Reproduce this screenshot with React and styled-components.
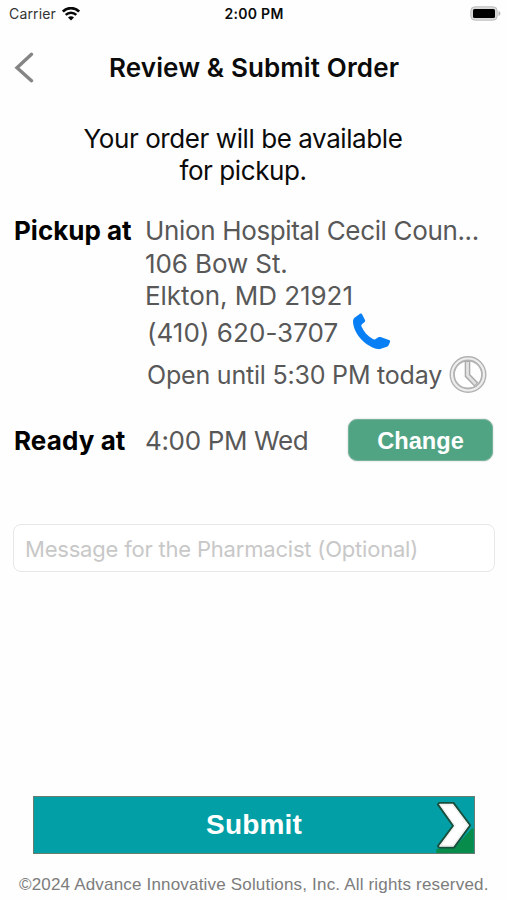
import React from "react";
import styled, { createGlobalStyle } from "styled-components";

const GlobalStyle = createGlobalStyle`
  * { box-sizing: border-box; }
  body { margin: 0; background: #fefefe; }
  svg { display: block; flex: none; }
`;

const Screen = styled.main`
  width: 507px;
  height: 900px;
  display: flex;
  flex-direction: column;
  overflow: hidden;
  background: #fefefe;
  color: #0b0b0b;
  font-family: Inter, sans-serif;
`;

const StatusBar = styled.header`
  height: 28px;
  display: grid;
  grid-template-columns: 1fr auto 1fr;
  align-items: center;
  padding: 0 8px 0 9px;
  font-size: 14px;
  line-height: 28px;
`;

const Carrier = styled.div`
  display: flex;
  align-items: center;
  gap: 6px;
  color: #333;
  letter-spacing: 0.15px;
`;

const Clock = styled.time`
  font-weight: 600;
  letter-spacing: 0.3px;
`;

const BatterySlot = styled.div`
  display: flex;
  justify-content: flex-end;
  margin-right: -2px;
  margin-top: -2px;
`;

const NavBar = styled.nav`
  height: 80px;
  display: flex;
  align-items: center;
  padding-left: 14px;
`;

const BackButton = styled.button`
  width: 95px;
  padding: 0;
  border: 0;
  background: none;
`;

const Title = styled.h1`
  margin: 0;
  font-size: 26px;
  line-height: 32px;
  font-weight: 600;
  letter-spacing: 0.13px;
  white-space: nowrap;
`;

const Notice = styled.p`
  margin: 15px 0 0;
  padding-right: 21px;
  text-align: center;
  font-size: 26px;
  line-height: 32px;
  letter-spacing: -0.42px;
`;

const Details = styled.dl`
  margin: 27px 0 0 14px;
  display: grid;
  grid-template-columns: 131px 1fr;
`;

const Label = styled.dt`
  font-size: 26px;
  line-height: 33px;
  font-weight: 700;
  letter-spacing: ${(p) => p.$spacing}px;
  color: #000;
`;

const Value = styled.dd`
  margin: 0;
  color: #585858;
`;

const Line = styled.div`
  height: ${(p) => p.$height || 33}px;
  display: flex;
  align-items: center;
  gap: ${(p) => p.$gap || 0}px;
  padding-left: ${(p) => p.$indent || 0}px;
  font-size: ${(p) => p.$size || 26}px;
  letter-spacing: ${(p) => p.$spacing}px;
  white-space: nowrap;
`;

const ReadyRow = styled.section`
  height: 42px;
  margin: 23px 14px 0;
  display: grid;
  grid-template-columns: 131px 1fr auto;
  align-items: center;
`;

const ReadyLabel = styled(Label).attrs({ as: "div" })``;
const ReadyValue = styled(Value).attrs({ as: "div" })``;

const ChangeButton = styled.button`
  width: 145px;
  height: 42px;
  padding: 2px 0 0;
  border: 1px solid #75b39b;
  border-radius: 9px;
  background: #50a484;
  box-shadow: 0 0 2px #c5c5c5;
  color: #fff;
  font: 700 23.6px/38px "Liberation Sans", sans-serif;
`;

const Message = styled.input`
  width: 482px;
  height: 48px;
  margin: 63px 0 0 13px;
  padding: 2px 11px 0;
  border: 1px solid #e7e7e7;
  border-radius: 8px;
  background: #fff;
  outline: 0;
  font: 400 22px/30px Inter, sans-serif;
  letter-spacing: -0.2px;
  &::placeholder { color: #c8c8c8; opacity: 1; }
`;

const SubmitButton = styled.button`
  width: 442px;
  height: 58px;
  margin: auto 0 0 33px;
  padding: 0;
  display: grid;
  grid-template-columns: 38px 1fr 38px;
  align-items: center;
  border: 1px solid #687c72;
  background: #02a0a6;
  color: #fff;
  font: 700 28px/56px "Liberation Sans", sans-serif;
`;

const SubmitText = styled.span`
  grid-column: 2;
  text-align: center;
  letter-spacing: 0.15px;
`;

const Footer = styled.footer`
  height: 46px;
  padding: 6px 0 0 19px;
  color: #7c7c7c;
  font: 400 17px/50px "Liberation Sans", sans-serif;
  letter-spacing: 0.18px;
  white-space: nowrap;
`;

const WifiIcon = () => (
  <svg width="18" height="14" viewBox="0 0 18 14" fill="none" stroke="#080808">
    <path d="M.8 4.600C5.200 0 12.800 0 17.200 4.600" strokeWidth="2.700" />
    <path d="M3.700 7.900c3-3 7.600-3 10.600 0" strokeWidth="2.500" />
    <path d="M6 10.500c1.700-1.600 4.300-1.600 6 0L9 13.600z" fill="#080808" stroke="none" />
  </svg>
);

const BatteryIcon = () => (
  <svg width="31" height="15" viewBox="0 0 31 15">
    <rect x=".8" y=".8" width="26.4" height="13.4" rx="4" fill="#d9d9d9" stroke="#bfbfbf" />
    <rect x="3" y="3" width="22" height="9" rx="1.5" fill="#000" />
    <path d="M28.500 5c2.600.7 2.600 4.300 0 5z" fill="#b7b7b7" />
  </svg>
);

const BackIcon = () => (
  <svg width="20" height="32" viewBox="0 0 20 32" fill="none">
    <path d="M17.500 2.300 3 15.700l14.500 13" stroke="#858585" strokeWidth="3.400" strokeLinecap="round" />
  </svg>
);

const PhoneGlyph = styled.svg`
  margin-top: -4px;
`;

const PhoneIcon = () => (
  <PhoneGlyph width="39" height="38" viewBox="0 0 39 38" fill="#087ff5">
    <path d="M8 1.800c1-.5 1.800-.2 2.200.7L13 8c.4.8.2 1.300-.4 1.900L10 12.300c-.8.7-.8 1.500-.4 2.500 2.400 5.200 6.500 9.700 11.300 12.300 1 .5 1.900.5 2.700-.2l2.800-1.700c.7-.4 1.400-.4 2.200-.1l8.300 2.800c1.200.4 1.500 1.100 1 2.300l-1.200 2.900c-.3.8-.9 1.300-1.700 1.700L29.500 36.600c-1 .4-2 .6-3.200.5C14.500 35.300 1.500 22.500 1 9.500c0-1.500.5-2.800 1.500-3.800z" />
  </PhoneGlyph>
);

const ClockIcon = () => (
  <svg width="38" height="38" viewBox="0 0 38 38" fill="none">
    <circle cx="19" cy="18.500" r="16.200" stroke="#eee" strokeWidth="3" />
    <circle cx="19" cy="18.500" r="17.800" stroke="#b2b2b2" strokeWidth="1.400" />
    <circle cx="19" cy="18.500" r="14" stroke="#b2b2b2" strokeWidth="1.800" />
    <path d="M18.500 5v14.500l8.800 9" stroke="#aaa" strokeWidth="5.600" />
    <path d="M18.500 6v13.500l8.200 8.400" stroke="#e2e2e2" strokeWidth="2.800" />
  </svg>
);

const ArrowIcon = () => (
  <svg width="38" height="56" viewBox="0 0 38 57">
    <path d="M0 57v-4l20-3 16-18h2v25z" fill="#078c4c" />
    <path d="M1.500 7.500 3 6h14.500l17 22.700L18 51.500H3L1.500 50 17 29.200z" fill="#fcfcfc" stroke="#184f3c" strokeWidth="1.900" strokeLinejoin="round" />
    <path d="M4 8h12.500l15.500 20.700L17 49.500H4.500L19 29.200z" fill="#fff" stroke="#ddd" strokeWidth=".6" />
  </svg>
);

export default function App() {
  return (
    <>
      <GlobalStyle />
      <Screen>
        <StatusBar>
          <Carrier>Carrier <WifiIcon /></Carrier>
          <Clock>2:00 PM</Clock>
          <BatterySlot><BatteryIcon /></BatterySlot>
        </StatusBar>
        <NavBar>
          <BackButton aria-label="Back"><BackIcon /></BackButton>
          <Title>Review &amp; Submit Order</Title>
        </NavBar>
        <Notice>Your order will be available<br />for pickup.</Notice>
        <Details>
          <Label $spacing={0}>Pickup at</Label>
          <Value>
            <Line $spacing={-0.35}>Union Hospital Cecil Coun...</Line>
            <Line $spacing={-0.1}>106 Bow St.</Line>
            <Line $height={31} $spacing={-0.05}>Elkton, MD 21921</Line>
            <Line $height={43} $indent={2} $gap={14} $spacing={0.05}>(410) 620-3707 <PhoneIcon /></Line>
            <Line $height={42} $indent={2} $gap={7} $size={25} $spacing={-0.2}>Open until 5:30 PM today <ClockIcon /></Line>
          </Value>
        </Details>
        <ReadyRow>
          <ReadyLabel $spacing={0.1}>Ready at</ReadyLabel>
          <ReadyValue><Line $spacing={-0.35}>4:00 PM Wed</Line></ReadyValue>
          <ChangeButton>Change</ChangeButton>
        </ReadyRow>
        <Message aria-label="Message" placeholder="Message for the Pharmacist (Optional)" />
        <SubmitButton>
          <SubmitText>Submit</SubmitText>
          <ArrowIcon />
        </SubmitButton>
        <Footer>©2024 Advance Innovative Solutions, Inc. All rights reserved.</Footer>
      </Screen>
    </>
  );
}
